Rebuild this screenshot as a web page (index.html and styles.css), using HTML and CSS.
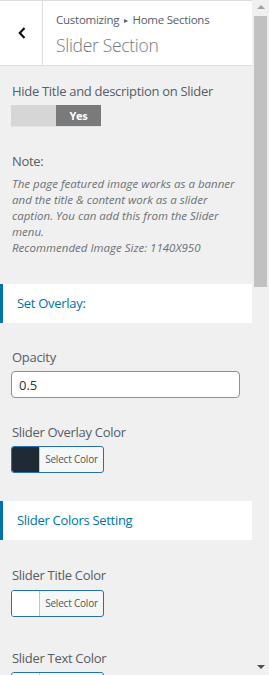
FILE: index.html
```html
<!DOCTYPE html>
<html lang="en">
<head>
  <meta charset="UTF-8" />
  <title>Slider Section</title>
  <link rel="stylesheet" href="styles.css">
</head>
<body>

<div class="frame">
  <div class="panel">

    <!-- section header -->
    <div class="section-head">
      <button class="back" type="button">
        <svg width="10" height="14" viewBox="0 0 10 14"><path d="M7.5 2 L2.8 7 L7.5 12" fill="none" stroke="#111" stroke-width="2.2"/></svg>
      </button>
      <div class="head-title">
        <span class="crumb">Customizing <span class="sep">&#9656;</span> Home Sections</span>
        <h3>Slider Section</h3>
      </div>
    </div>

    <div class="controls">
      <div class="control">
        <span class="control-title">Hide Title and description on Slider</span>
        <div class="toggle"><span class="off"></span><span class="on">Yes</span></div>
      </div>

      <div class="control">
        <span class="control-title">Note:</span>
        <p class="desc">The page featured image works as a banner and the title &amp; content work as a slider caption. You can add this from the Slider menu.<br>Recommended Image Size: 1140X950</p>
      </div>

      <div class="group-title">Set Overlay:</div>

      <div class="control">
        <span class="control-title">Opacity</span>
        <input class="text-input" type="text" value="0.5">
      </div>

      <div class="control">
        <span class="control-title">Slider Overlay Color</span>
        <button class="color-btn" type="button"><span class="swatch dark"></span><span class="btn-text">Select Color</span></button>
      </div>

      <div class="group-title">Slider Colors Setting</div>

      <div class="control spaced">
        <span class="control-title">Slider Title Color</span>
        <button class="color-btn" type="button"><span class="swatch"></span><span class="btn-text">Select Color</span></button>
      </div>

      <div class="control">
        <span class="control-title">Slider Text Color</span>
        <button class="color-btn" type="button"><span class="swatch"></span><span class="btn-text">Select Color</span></button>
      </div>
    </div>
  </div>

  <!-- scrollbar -->
  <div class="scrollbar">
    <span class="arrow up"></span>
    <span class="thumb"></span>
    <span class="track"></span>
    <span class="arrow down"></span>
  </div>
</div>

</body>
</html>
```

FILE: styles.css
```css
body {
  margin: 0;
  font-family: "Open Sans", "Noto Sans", sans-serif;
  background: #f0f0f0;
  color: #555d66;
}
.frame {
  display: flex;
  height: 675px;
  overflow: hidden;
}
.panel {
  width: 252px;
  flex: none;
}
.section-head {
  display: flex;
  height: 64px;
  background: #fff;
  border-top: 1px solid #ddd;
  border-bottom: 1px solid #ddd;
}
.back {
  width: 43px;
  flex: none;
  display: flex;
  align-items: center;
  justify-content: center;
  padding: 0 0 0 1px;
  background: #fff;
  border: none;
  border-right: 1px solid #ddd;
}
.head-title {
  padding: 10px 0 0 13px;
}
.crumb {
  display: block;
  font-size: 11.5px;
  line-height: 18px;
  letter-spacing: -0.25px;
  color: #555d66;
}
.sep {
  font-size: 8px;
  margin: 0 2px;
  position: relative;
  top: -1px;
}
.head-title h3 {
  margin: 2px 0 0;
  font-size: 17.5px;
  font-weight: 300;
  line-height: 26px;
  letter-spacing: -0.3px;
  color: #737a80;
}
.controls {
  padding-top: 15px;
}
.control {
  padding: 0 12px;
  margin-bottom: 24px;
}
.control.spaced {
  padding-top: 1px;
  margin-bottom: 31px;
}
.control.spaced .control-title {
  margin-bottom: 5px;
}
.control-title {
  display: block;
  font-size: 13px;
  font-weight: 500;
  line-height: 20px;
  letter-spacing: -0.3px;
  margin-bottom: 4px;
}
.toggle {
  display: flex;
  width: 90px;
  height: 21px;
  margin-left: -1px;
  border-bottom: 1px solid #e2e2e2;
}
.toggle .off {
  width: 45px;
  background: #d6d6d6;
}
.toggle .on {
  width: 45px;
  background: #7a7a7a;
  color: #fff;
  font-size: 11px;
  font-weight: 700;
  line-height: 21px;
  letter-spacing: -0.3px;
  text-align: center;
}
.desc {
  margin: 5px 0 0;
  font-size: 11.5px;
  font-style: italic;
  line-height: 16px;
  color: #6c7177;
}
.group-title {
  background: #fff;
  border-left: 3px solid #0073aa;
  height: 39px;
  line-height: 39px;
  padding-left: 14px;
  margin: 28px 0 24px;
  font-size: 13px;
  font-weight: 500;
  letter-spacing: -0.3px;
  color: #0073aa;
}
.text-input {
  display: block;
  box-sizing: border-box;
  width: 229px;
  height: 27px;
  margin-left: -1px;
  padding: 0 7px;
  border: 1px solid #8c8f94;
  border-radius: 4px;
  font-family: inherit;
  font-size: 13px;
  color: #2c3338;
}
.color-btn {
  display: flex;
  box-sizing: border-box;
  width: 93px;
  height: 27px;
  margin-left: -1px;
  padding: 0;
  border: 1px solid #2271b1;
  border-radius: 3px;
  background: #f6f7f7;
  overflow: hidden;
  font-family: inherit;
}
.swatch {
  width: 27px;
  height: 100%;
  background: #fff;
  border-right: 1px solid #c3c4c7;
}
.swatch.dark {
  background: #1e2b37;
}
.btn-text {
  flex: 1;
  font-size: 10px;
  line-height: 25px;
  letter-spacing: -0.2px;
  color: #50575e;
  text-align: center;
}
.scrollbar {
  width: 17px;
  flex: none;
  display: flex;
  flex-direction: column;
  align-items: center;
  background: #f0f0f0;
}
.arrow {
  height: 16px;
  width: 13px;
  flex: none;
  display: flex;
  justify-content: center;
}
.arrow::before {
  content: "";
  width: 0;
  height: 0;
  border-left: 4px solid transparent;
  border-right: 4px solid transparent;
}
.arrow.up::before {
  margin-top: 5px;
  border-bottom: 4px solid #a3a3a3;
}
.arrow.down::before {
  margin-top: 6px;
  border-top: 4px solid #505050;
}
.thumb {
  width: 13px;
  height: 271px;
  flex: none;
  background: #c1c1c1;
}
.track {
  flex: 1;
}
```
